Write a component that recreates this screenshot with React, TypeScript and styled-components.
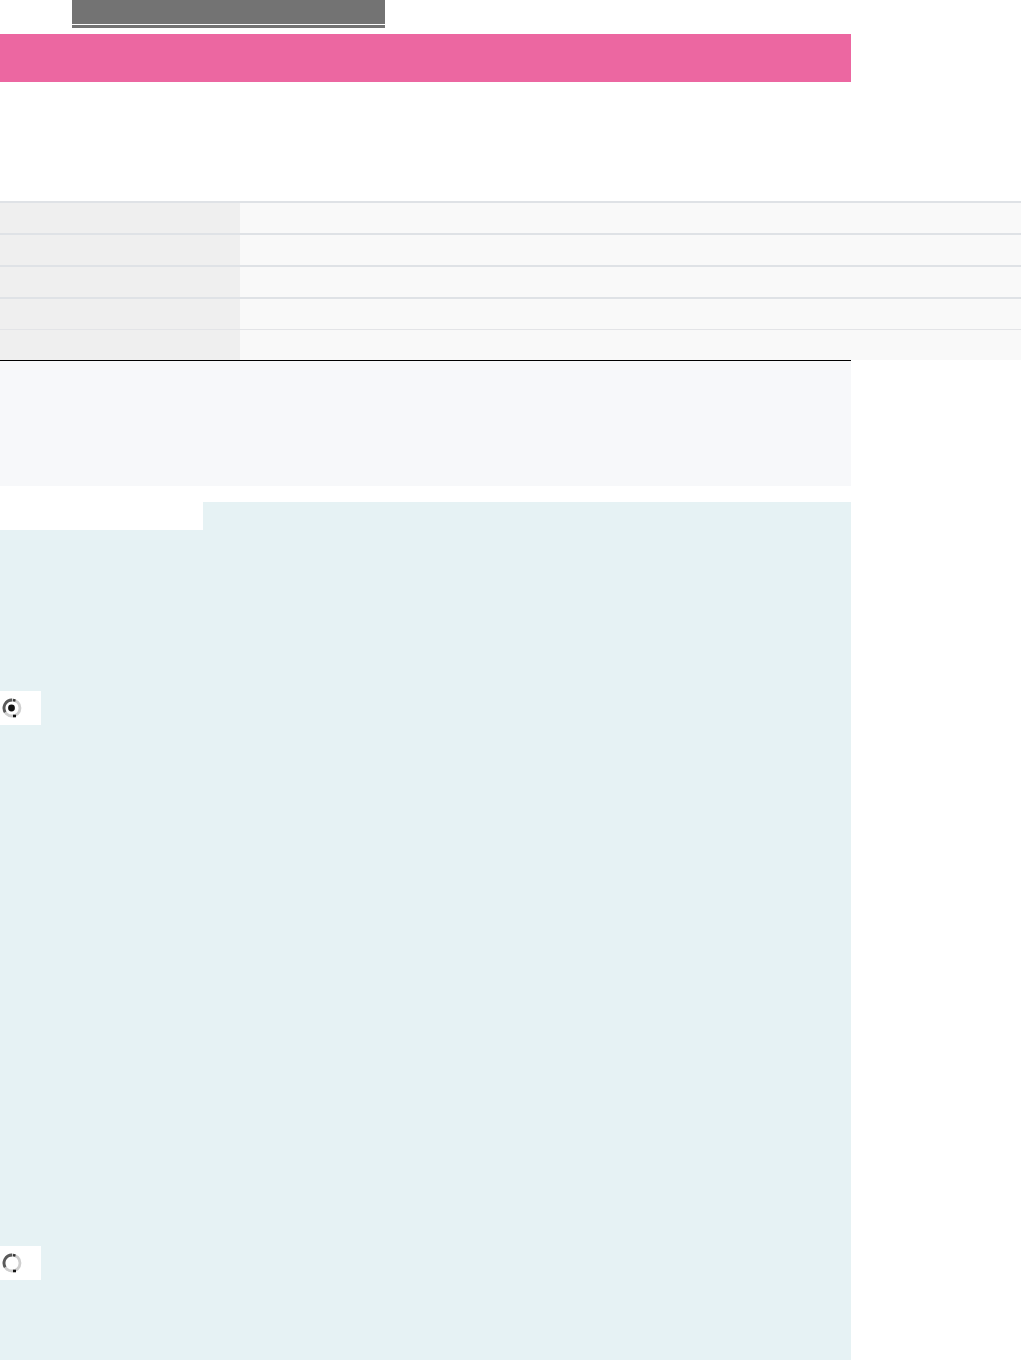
import React from 'react';
import styled, { createGlobalStyle } from 'styled-components';

const GlobalStyle = createGlobalStyle`
  body {
    margin: 0;
    background: #ffffff;
    font-family: "Liberation Sans", Arial, sans-serif;
  }
`;

const Page = styled.div`
  width: 1021px;
  height: 1360px;
  overflow: hidden;
`;

const TopBar = styled.div`
  margin-left: 72px;
  width: 313px;
  height: 24px;
  background: #737373;
  border-bottom: 1px solid #ffffff;
  box-shadow: 0 3px 0 0 #737373;
`;

const Banner = styled.div`
  margin-top: 9px;
  width: 851px;
  height: 48px;
  background: #ec67a1;
`;

const Table = styled.div`
  margin-top: 119px;
  width: 1021px;
`;

const Row = styled.div<{ $last?: boolean }>`
  display: grid;
  grid-template-columns: 240px 1fr;
  height: 30px;
  border-top: ${(p) => (p.$last ? '1px solid #e3e4e7' : '2px solid #dfe2e6')};
`;

const Label = styled.div`
  background: #efefef;
`;

const Value = styled.div`
  background: #f9f9f9;
`;

const Notice = styled.div`
  width: 851px;
  height: 126px;
  background: #f7f8fa;
  border-top: 1px solid #000000;
  box-sizing: border-box;
`;

const TabStrip = styled.div`
  margin-top: 16px;
  display: grid;
  grid-template-columns: 203px 648px;
  height: 28px;
`;

const Tab = styled.div<{ $active?: boolean }>`
  background: ${(p) => (p.$active ? '#e6f2f4' : '#ffffff')};
`;

const Panel = styled.div`
  width: 851px;
  height: 830px;
  background: #e6f2f4;
  padding-top: 161px;
  box-sizing: border-box;
  display: flex;
  flex-direction: column;
  gap: 521px;
`;

const RadioBox = styled.div`
  width: 41px;
  height: 34px;
  background: #ffffff;
  display: flex;
  align-items: center;
  padding-left: 1px;
  box-sizing: border-box;
`;

const Radio = ({ checked }: { checked?: boolean }) => (
  <svg width="22" height="24" viewBox="0 0 22 24">
    <circle cx="11" cy="12" r="8" fill="none" stroke="#cfcfcf" strokeWidth="2.8" />
    <path d="M11 4 A8 8 0 0 0 4.2 16.2" fill="none" stroke="#5a5a5a" strokeWidth="2.8" />
    <path d="M12 20 L15 20" stroke="#111111" strokeWidth="2.6" />
    <path d="M12 4 L14.5 4.6" stroke="#333333" strokeWidth="2.4" />
    {checked && <circle cx="10.5" cy="12" r="3.4" fill="#111111" />}
  </svg>
);

const App: React.FC = () => {
  return (
    <Page>
      <GlobalStyle />
      <TopBar />
      <Banner />
      <Table>
        <Row><Label /><Value /></Row>
        <Row><Label /><Value /></Row>
        <Row><Label /><Value /></Row>
        <Row><Label /><Value /></Row>
        <Row $last><Label /><Value /></Row>
      </Table>
      <Notice />
      <TabStrip>
        <Tab />
        <Tab $active />
      </TabStrip>
      <Panel>
        <RadioBox><Radio checked /></RadioBox>
        <RadioBox><Radio /></RadioBox>
      </Panel>
    </Page>
  );
};

export default App;
